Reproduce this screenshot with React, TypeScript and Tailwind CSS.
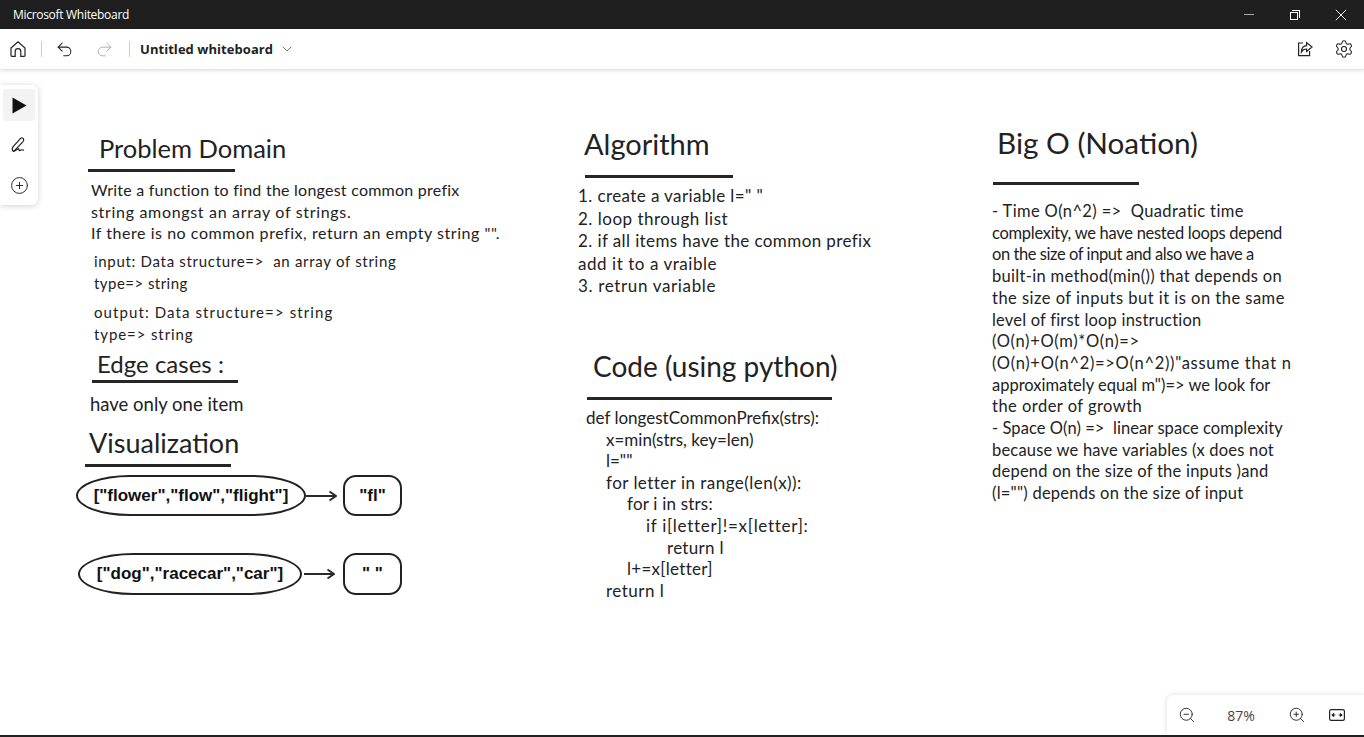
import { ChevronDown, CirclePlus, Redo2, Settings, Undo2, ZoomIn, ZoomOut } from 'lucide-react';
import type { ReactNode } from 'react';

const hand = "font-['Lato',sans-serif] text-[#222] whitespace-pre";

type Line = [string, string];

const problem: Line[] = [
  ['Write a function to find the longest common prefix', 'tracking-[0.24px]'],
  ['string amongst an array of strings.', 'tracking-[0.68px]'],
  ['If there is no common prefix, return an empty string "".', 'tracking-[0.54px]'],
];

const inputLines: Line[] = [
  ['input: Data structure=>  an array of string', 'tracking-[0.7px]'],
  ['type=> string', 'tracking-[0.46px]'],
];

const outputLines: Line[] = [
  ['output: Data structure=> string', 'tracking-[1.1px]'],
  ['type=> string', 'tracking-[0.9px]'],
];

const algorithm: Line[] = [
  ['1. create a variable l=" "', 'tracking-[0.4px]'],
  ['2. loop through list', 'tracking-[0.5px]'],
  ['2. if all items have the common prefix', 'tracking-[0.4px]'],
  ['add it to a vraible', 'tracking-[0.55px]'],
  ['3. retrun variable', 'tracking-[0.65px]'],
];

const code: Line[] = [
  ['def longestCommonPrefix(strs):', ''],
  ['x=min(strs, key=len)', 'pl-[20px]'],
  ['l=""', 'pl-[20px]'],
  ['for letter in range(len(x)):', 'pl-[20px] tracking-[0.47px]'],
  ['for i in strs:', 'pl-[41px] tracking-[0.2px]'],
  ['if i[letter]!=x[letter]:', 'pl-[60px] tracking-[0.7px]'],
  ['return l', 'pl-[81px] tracking-[0.3px]'],
  ['l+=x[letter]', 'pl-[41px] tracking-[0.28px]'],
  ['return l', 'pl-[20px] tracking-[0.5px]'],
];

const bigO: Line[] = [
  ['- Time O(n^2) =>  Quadratic time', 'tracking-[0.37px]'],
  ['complexity, we have nested loops depend', 'tracking-[-0.28px]'],
  ['on the size of input and also we have a', 'tracking-[-0.43px]'],
  ['built-in method(min()) that depends on', 'tracking-[0.32px]'],
  ['the size of inputs but it is on the same', 'tracking-[0.48px]'],
  ['level of first loop instruction', 'tracking-[0.2px]'],
  ['(O(n)+O(m)*O(n)=>', 'tracking-[0.66px]'],
  ['(O(n)+O(n^2)=>O(n^2))"assume that n', 'tracking-[0.7px]'],
  ['approximately equal m")=> we look for', ''],
  ['the order of growth', 'tracking-[0.47px]'],
  ['- Space O(n) =>  linear space complexity', 'tracking-[0.07px]'],
  ['because we have variables (x does not', 'tracking-[0.2px]'],
  ['depend on the size of the inputs )and', 'tracking-[0.24px]'],
  ['(l="") depends on the size of input', 'tracking-[0.24px]'],
];

function HomeIcon() {
  return (
    <svg width="18" height="18" viewBox="0 0 18 18" fill="none" stroke="#222" strokeWidth="1.2">
      <path d="M2 8 9 1.8 16 8v7.6a.8.8 0 0 1-.8.8h-3.4v-5a2.8 2.8 0 0 0-5.6 0v5H2.8a.8.8 0 0 1-.8-.8Z" />
    </svg>
  );
}

function ShareIcon() {
  return (
    <svg width="16" height="16" viewBox="0 0 16 16" fill="none" stroke="#222" strokeWidth="1.2">
      <path d="M6 2H1.6v12.6h11V10" />
      <path d="M9.6 1.6 15 6l-5.4 4.4V8C7 8 5.4 9.2 4.4 11c0-3.6 2-6.2 5.2-6.4Z" />
    </svg>
  );
}

function PenIcon() {
  return (
    <svg width="18" height="18" viewBox="0 0 18 18" fill="none" stroke="#222" strokeWidth="1.2">
      <path d="M3 15c-1.6-1.6-.6-3.6 1-5.4L10.6 2.4c1-.9 2.6-.5 3 .8.3 1-.1 1.8-.8 2.6L6.4 12.6C5.2 14 4 15.6 3 15Z" />
      <path d="M3 15c2 .6 3-.6 4.4-1.8 1.2-1 1.6-.4 1.6.6 0 1 1 1 2 .2.8-.6 1.4-.4 3 .4" />
    </svg>
  );
}

function FitIcon() {
  return (
    <svg width="16" height="12" viewBox="0 0 16 12" fill="none" stroke="#222" strokeWidth="1.2">
      <rect x=".6" y=".6" width="14.8" height="10.8" rx="1.6" />
      <path d="M3.4 6h3M9.6 6h3" />
      <path d="M5 4.4 3.2 6 5 7.6M11 4.4 12.8 6 11 7.6" fill="#222" />
    </svg>
  );
}

function Arrow() {
  return (
    <svg width="31" height="14" viewBox="0 0 31 14" fill="none" stroke="#2a2a2a" strokeWidth="2">
      <path d="M0 7h29M23.5 2.5 30 7l-6.5 4.5" />
    </svg>
  );
}

function Underline({ className }: { className: string }) {
  return <div className={`absolute h-[2.5px] bg-[#262626] ${className}`} />;
}

function Note({ className, children }: { className: string; children: ReactNode }) {
  return <div className={`absolute ${hand} ${className}`}>{children}</div>;
}

function Lines({ className, lines }: { className: string; lines: Line[] }) {
  return (
    <Note className={className}>
      {lines.map(([text, cls], i) => (
        <div key={i} className={cls}>
          {text}
        </div>
      ))}
    </Note>
  );
}

function Oval({ className, children }: { className: string; children: ReactNode }) {
  return (
    <div className={`flex items-center justify-center border-[2.5px] border-[#222] font-['Liberation_Sans',sans-serif] text-[17px] font-bold text-[#111] ${className}`}>
      {children}
    </div>
  );
}

export default function App() {
  return (
    <div className="relative flex h-[737px] w-[1364px] flex-col overflow-hidden bg-white font-['Open_Sans',sans-serif]">
      {/* title bar */}
      <div className="flex h-[29px] shrink-0 items-center justify-between bg-[#201f1f] pl-[13px] text-white">
        <span className="text-[12px] tracking-[-0.3px]">Microsoft Whiteboard</span>
        <div className="flex items-center">
          <div className="flex h-[29px] w-[46px] items-center justify-center">
            <div className="h-px w-[10px] bg-[#aaa]" />
          </div>
          <div className="flex h-[29px] w-[46px] items-center justify-center">
            <div className="relative h-[10px] w-[10px]">
              <div className="absolute left-0 top-[2px] h-[8px] w-[8px] border border-white" />
              <div className="absolute right-0 top-0 h-[8px] w-[8px] border-r border-t border-white" />
            </div>
          </div>
          <div className="flex h-[29px] w-[46px] items-center justify-center">
            <svg width="12" height="12" viewBox="0 0 12 12" stroke="#eee" strokeWidth="1">
              <path d="M.8.8l10.4 10.4M11.2.8.8 11.2" />
            </svg>
          </div>
        </div>
      </div>

      {/* toolbar */}
      <div className="relative z-10 flex h-[40px] shrink-0 items-center justify-between bg-white pl-[9px] pr-[10px] shadow-[0_1px_4px_rgba(0,0,0,0.18)]">
        <div className="flex items-center">
          <HomeIcon />
          <div className="ml-[14px] h-[16px] w-px bg-[#ccc]" />
          <Undo2 size={19} strokeWidth={1.3} color="#222" className="ml-[13px]" />
          <Redo2 size={19} strokeWidth={1.2} color="#aaa" className="ml-[21px]" />
          <div className="ml-[15px] h-[16px] w-px bg-[#ccc]" />
          <span className="ml-[10px] translate-y-px text-[13px] font-bold tracking-[0.05px] text-[#222]">Untitled whiteboard</span>
          <ChevronDown size={16} strokeWidth={1} color="#333" className="ml-[6px]" />
        </div>
        <div className="flex items-center gap-[21px]">
          <ShareIcon />
          <Settings size={20} strokeWidth={1.3} color="#222" />
        </div>
      </div>

      {/* canvas */}
      <div className="relative flex-1 bg-white">
        {/* left tools */}
        <div className="absolute left-0 top-[16px] z-10 flex h-[120px] w-[38px] flex-col items-center gap-[8px] rounded-r-[6px] bg-white pt-[4px] shadow-[0_1px_6px_rgba(0,0,0,0.18)]">
          <div className="flex h-[32px] w-[32px] items-center justify-center rounded-[3px] bg-[#f3f3f3]">
            <svg width="15" height="17" viewBox="0 0 15 17" fill="#111">
              <path d="M.5.5 14.5 8.5.5 16.5Z" />
            </svg>
          </div>
          <div className="flex h-[32px] items-center">
            <PenIcon />
          </div>
          <div className="flex h-[32px] items-center">
            <CirclePlus size={19} strokeWidth={1.2} color="#222" />
          </div>
        </div>

        {/* problem domain */}
        <Note className="left-[99px] top-[60px] text-[25.5px] leading-[38px]">Problem Domain</Note>
        <Underline className="left-[88px] top-[100px] w-[147px]" />
        <Lines className="left-[91px] top-[110px] text-[16px] leading-[21.7px]" lines={problem} />
        <Lines className="left-[94px] top-[181px] text-[15px] leading-[22px]" lines={inputLines} />
        <Lines className="left-[94px] top-[232px] text-[15px] leading-[22px]" lines={outputLines} />
        <Note className="left-[97px] top-[277px] text-[24px] leading-[36px]">Edge cases :</Note>
        <Underline className="left-[92px] top-[311px] w-[146px]" />
        <Note className="left-[90px] top-[321px] text-[18.5px] leading-[28px]">have only one item</Note>
        <Note className="left-[89px] top-[355px] text-[27px] leading-[38px]">Visualization</Note>
        <Underline className="left-[85px] top-[395px] w-[146px]" />

        {/* visualization */}
        <div className="absolute left-[76px] top-[406px] flex items-center">
          <Oval className="h-[41px] w-[230px] rounded-[55px/21px]">["flower","flow","flight"]</Oval>
          <Arrow />
          <Oval className="ml-[6px] h-[41px] w-[59px] rounded-[13px]">"fl"</Oval>
        </div>
        <div className="absolute left-[78px] top-[484px] flex items-center">
          <Oval className="h-[42px] w-[224px] rounded-[55px/21px]">["dog","racecar","car"]</Oval>
          <div className="ml-[2px]">
            <Arrow />
          </div>
          <Oval className="ml-[8px] h-[42px] w-[59px] rounded-[13px]">" "</Oval>
        </div>

        {/* algorithm */}
        <Note className="left-[584px] top-[54px] text-[29px] leading-[42px]">Algorithm</Note>
        <Underline className="left-[585px] top-[106px] w-[148px]" />
        <Lines className="left-[578px] top-[116px] text-[17px] leading-[22.5px]" lines={algorithm} />

        {/* code */}
        <Note className="left-[593px] top-[276px] text-[28px] leading-[42px]">Code (using python)</Note>
        <Underline className="left-[587px] top-[328px] w-[245px]" />
        <Lines className="left-[586px] top-[338px] text-[17px] leading-[21.6px]" lines={code} />

        {/* big o */}
        <Note className="left-[997px] top-[53px] text-[29.7px] leading-[42px]">Big O (Noation)</Note>
        <Underline className="left-[993px] top-[113px] w-[146px]" />
        <Lines className="left-[992px] top-[132px] text-[16.5px] leading-[21.7px]" lines={bigO} />

        {/* zoom controls */}
        <div className="absolute bottom-[2px] right-0 z-10 flex h-[40px] w-[197px] items-center rounded-tl-[6px] bg-white pl-[11px] shadow-[0_0_5px_rgba(0,0,0,0.15)]">
          <ZoomOut size={18} strokeWidth={1.2} color="#222" />
          <span className="ml-[28px] w-[34px] text-center text-[14px] text-[#444]">87%</span>
          <ZoomIn size={18} strokeWidth={1.2} color="#222" className="ml-[30px]" />
          <div className="ml-[23px]">
            <FitIcon />
          </div>
        </div>
        <div className="absolute bottom-0 left-0 h-[2px] w-full bg-[#222]" />
      </div>
    </div>
  );
}
